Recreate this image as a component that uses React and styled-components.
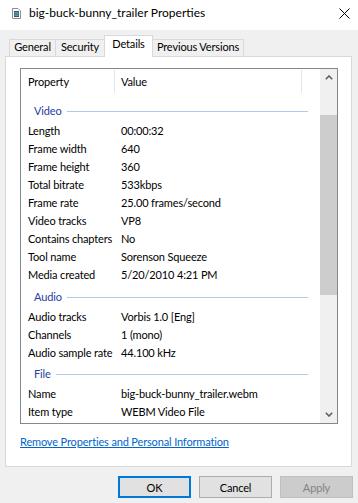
import React from "react";
import styled, { createGlobalStyle } from "styled-components";

const Global = createGlobalStyle`
  html, body { margin: 0; padding: 0; }
  body {
    background: #f0f0f0;
    font-family: "Lato", "Liberation Sans", sans-serif;
    font-size: 11px;
    letter-spacing: -0.15px;
    color: #000;
    width: 358px;
    height: 503px;
    overflow: hidden;
  }
  * { box-sizing: border-box; }
`;

const Window = styled.div`
  width: 358px;
  height: 503px;
  display: flex;
  flex-direction: column;
`;

const TitleBar = styled.div`
  height: 30px;
  flex: none;
  background: #fff;
  display: flex;
  align-items: flex-start;
  padding: 6px 8px 0 12px;
`;

const TitleIcon = styled.svg`
  margin-top: 2px;
  flex: none;
`;

const TitleText = styled.div`
  margin-left: 8px;
  font-size: 12px;
  letter-spacing: 0;
  line-height: 14px;
  flex: 1;
  white-space: nowrap;
`;

const CloseIcon = styled.svg`
  margin-top: 2px;
  flex: none;
`;

const TabStrip = styled.div`
  height: 26px;
  flex: none;
  display: flex;
  align-items: flex-end;
  padding-left: 9px;
  position: relative;
  z-index: 1;
`;

const Tab = styled.div`
  width: ${(p) => p.$w}px;
  height: ${(p) => (p.$active ? 22 : 17)}px;
  margin-bottom: ${(p) => (p.$active ? -1 : 0)}px;
  margin-left: ${(p) => (p.$first ? 0 : -1)}px;
  border: 1px solid #d9d9d9;
  border-bottom: none;
  background: ${(p) => (p.$active ? "#fff" : "#f0f0f0")};
  line-height: ${(p) => (p.$active ? 15 : 13)}px;
  text-align: center;
  white-space: nowrap;
  position: relative;
  z-index: ${(p) => (p.$active ? 2 : 1)};
`;

const Panel = styled.div`
  margin-left: 5px;
  width: 347px;
  height: 411px;
  flex: none;
  background: #fff;
  border: 1px solid #d9d9d9;
  padding: 11px 13px 0 14px;
  display: flex;
  flex-direction: column;
`;

const ListBox = styled.div`
  height: 356px;
  border: 1px solid #828790;
  display: flex;
  flex: none;
  overflow: hidden;
`;

const ListMain = styled.div`
  flex: 1;
  min-width: 0;
  display: flex;
  flex-direction: column;
`;

const Header = styled.div`
  height: 24px;
  flex: none;
  display: flex;
  align-items: stretch;
`;

const HeaderCell = styled.div`
  width: ${(p) => p.$w}px;
  flex: none;
  padding-left: ${(p) => p.$pl}px;
  display: flex;
  align-items: center;
  border-right: 1px solid #e5e5e5;
  margin: 1px 0 0 0;
  line-height: 18px;
`;

const Content = styled.div`
  flex: 1;
  overflow: hidden;
`;

const GroupHeader = styled.div`
  display: flex;
  align-items: center;
  padding: ${(p) => (p.$first ? 9 : 3.5)}px 12px 2px 13px;
  line-height: 18px;
  color: #2540a3;
`;

const GroupLine = styled.div`
  flex: 1;
  height: 1px;
  background: #b5c6ee;
  margin-left: 5px;
  margin-top: 1px;
`;

const Row = styled.div`
  display: flex;
  height: 18px;
  line-height: 18px;
  white-space: nowrap;
`;

const NameCell = styled.div`
  width: 94px;
  flex: none;
  padding-left: 7px;
  overflow: hidden;
`;

const ValueCell = styled.div`
  flex: 1;
  padding-left: 6px;
  overflow: hidden;
`;

const ScrollBar = styled.div`
  width: 17px;
  flex: none;
  background: #f0f0f0;
  display: flex;
  flex-direction: column;
`;

const ScrollButton = styled.div`
  height: 17px;
  flex: none;
  display: flex;
  align-items: center;
  justify-content: center;
`;

const Track = styled.div`
  flex: 1;
  padding-top: 29px;
`;

const Thumb = styled.div`
  height: 180px;
  background: #cdcdcd;
`;

const Link = styled.a`
  margin-top: 9px;
  line-height: 18px;
  color: #0066cc;
  text-decoration: underline;
  white-space: nowrap;
  cursor: pointer;
`;

const ButtonRow = styled.div`
  margin-top: 9px;
  display: flex;
  justify-content: flex-end;
  gap: 8px;
  padding-right: 5px;
`;

const Button = styled.div`
  width: 73px;
  height: 22px;
  display: flex;
  align-items: center;
  justify-content: center;
  background: ${(p) => (p.$disabled ? "#cccccc" : "#e1e1e1")};
  border: ${(p) =>
    p.$default ? "2px solid #0078d7" : p.$disabled ? "1px solid #bfbfbf" : "1px solid #adadad"};
  color: ${(p) => (p.$disabled ? "#838383" : "#000")};
`;

const groups = [
  {
    name: "Video",
    rows: [
      ["Length", "00:00:32"],
      ["Frame width", "640"],
      ["Frame height", "360"],
      ["Total bitrate", "533kbps"],
      ["Frame rate", "25.00 frames/second"],
      ["Video tracks", "VP8"],
      ["Contains chapters", "No"],
      ["Tool name", "Sorenson Squeeze"],
      ["Media created", "5/20/2010 4:21 PM"],
    ],
  },
  {
    name: "Audio",
    rows: [
      ["Audio tracks", "Vorbis 1.0 [Eng]"],
      ["Channels", "1 (mono)"],
      ["Audio sample rate", "44.100 kHz"],
    ],
  },
  {
    name: "File",
    rows: [
      ["Name", "big-buck-bunny_trailer.webm"],
      ["Item type", "WEBM Video File"],
    ],
  },
];

const tabs = [
  { label: "General", w: 47 },
  { label: "Security", w: 50 },
  { label: "Details", w: 49, active: true },
  { label: "Previous Versions", w: 92 },
];

function Chevron({ down }) {
  return (
    <svg width="8" height="5" viewBox="0 0 8 5">
      <polyline
        points={down ? "0.8,0.8 4,4 7.2,0.8" : "0.8,4.2 4,1 7.2,4.2"}
        fill="none"
        stroke="#606060"
        strokeWidth="1.6"
      />
    </svg>
  );
}

export default function App() {
  return (
    <Window>
      <Global />
      <TitleBar>
        <TitleIcon width="9" height="11" viewBox="0 0 9 11">
          <path d="M0.5 0.5 H6 L8.5 3 V10.5 H0.5 Z" fill="#fff" stroke="#8c8c8c" />
          <rect x="2" y="3" width="5" height="6" fill="#3b5273" />
          <rect x="2.5" y="4" width="4" height="2" fill="#4c8fcf" />
          <rect x="2.5" y="6.5" width="4" height="1.5" fill="#5aa96a" />
        </TitleIcon>
        <TitleText>big-buck-bunny_trailer Properties</TitleText>
        <CloseIcon width="11" height="11" viewBox="0 0 11 11">
          <path d="M0.5 0.5 L10.5 10.5 M10.5 0.5 L0.5 10.5" stroke="#000" strokeWidth="1" />
        </CloseIcon>
      </TitleBar>
      <TabStrip>
        {tabs.map((t, i) => (
          <Tab key={t.label} $w={t.w} $active={t.active} $first={i === 0}>
            {t.label}
          </Tab>
        ))}
      </TabStrip>
      <Panel>
        <ListBox>
          <ListMain>
            <Header>
              <HeaderCell $w={94} $pl={7}>Property</HeaderCell>
              <HeaderCell $w={187} $pl={6}>Value</HeaderCell>
            </Header>
            <Content>
              {groups.map((g, gi) => (
                <React.Fragment key={g.name}>
                  <GroupHeader $first={gi === 0}>
                    {g.name}
                    <GroupLine />
                  </GroupHeader>
                  {g.rows.map(([n, v]) => (
                    <Row key={n}>
                      <NameCell>{n}</NameCell>
                      <ValueCell>{v}</ValueCell>
                    </Row>
                  ))}
                </React.Fragment>
              ))}
            </Content>
          </ListMain>
          <ScrollBar>
            <ScrollButton>
              <Chevron />
            </ScrollButton>
            <Track>
              <Thumb />
            </Track>
            <ScrollButton>
              <Chevron down />
            </ScrollButton>
          </ScrollBar>
        </ListBox>
        <Link>Remove Properties and Personal Information</Link>
      </Panel>
      <ButtonRow>
        <Button $default>OK</Button>
        <Button>Cancel</Button>
        <Button $disabled>Apply</Button>
      </ButtonRow>
    </Window>
  );
}
